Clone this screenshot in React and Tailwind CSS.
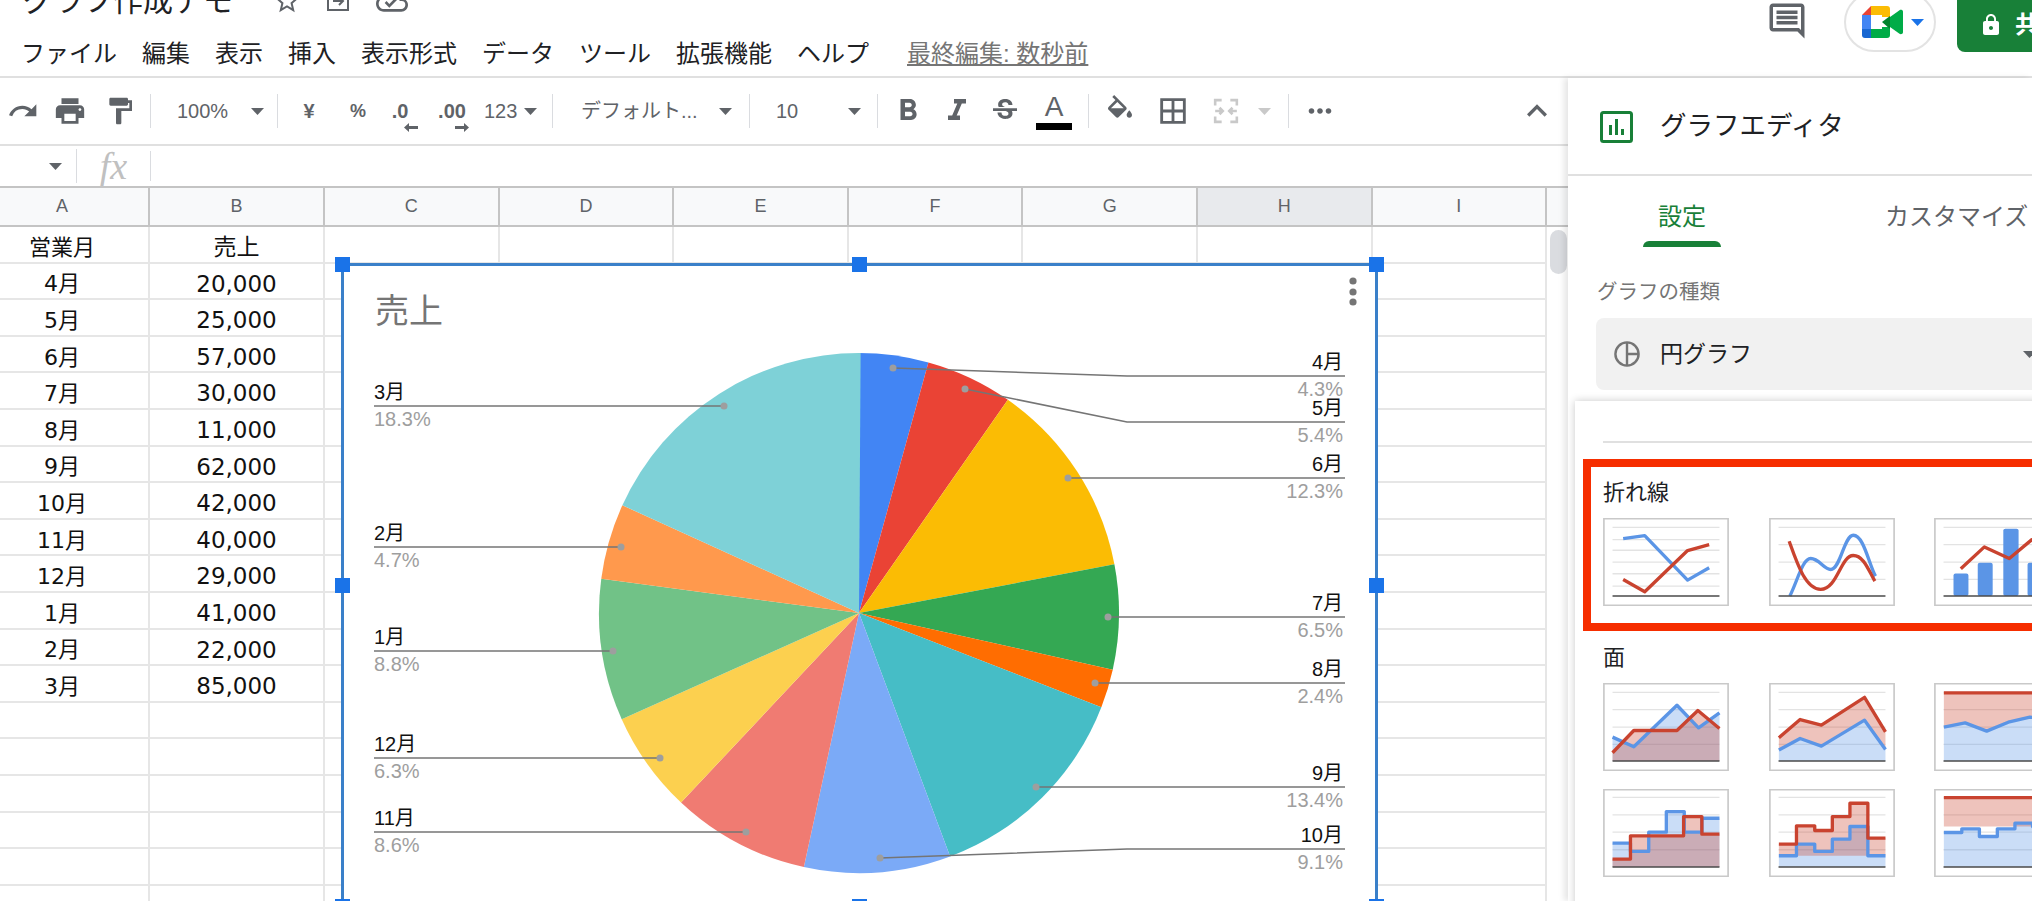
import {
  MdRedo, MdPrint, MdFormatPaint, MdFormatBold, MdFormatItalic, MdStrikethroughS,
  MdBorderAll, MdMoreHoriz, MdExpandLess, MdStarBorder,
  MdOutlineCloudDone, MdOutlineComment, MdLock,
} from 'react-icons/md'

const ROWS = [
  ['営業月', '売上'], ['4月', '20,000'], ['5月', '25,000'], ['6月', '57,000'], ['7月', '30,000'],
  ['8月', '11,000'], ['9月', '62,000'], ['10月', '42,000'], ['11月', '40,000'], ['12月', '29,000'],
  ['1月', '41,000'], ['2月', '22,000'], ['3月', '85,000'], ['', ''], ['', ''], ['', ''], ['', ''], ['', ''], ['', ''], ['', ''],
]

const COLS = ['C', 'D', 'E', 'F', 'G', 'H', 'I']

const SLICES = [
  { pct: 4.3, color: '#4285f4' }, { pct: 5.4, color: '#ea4335' }, { pct: 12.3, color: '#fbbc04' },
  { pct: 6.5, color: '#34a853' }, { pct: 2.4, color: '#ff6d01' }, { pct: 13.4, color: '#46bdc6' },
  { pct: 9.1, color: '#7baaf7' }, { pct: 8.6, color: '#f07b72' }, { pct: 6.3, color: '#fcd04f' },
  { pct: 8.8, color: '#71c287' }, { pct: 4.7, color: '#ff994d' }, { pct: 18.3, color: '#7ed1d7' },
]

const LABELS = [
  { m: '3月', p: '18.3%', y: 406, dot: [724, 406], side: 'l' },
  { m: '2月', p: '4.7%', y: 547, dot: [621, 547], side: 'l' },
  { m: '1月', p: '8.8%', y: 651, dot: [613, 651], side: 'l' },
  { m: '12月', p: '6.3%', y: 758, dot: [660, 758], side: 'l' },
  { m: '11月', p: '8.6%', y: 832, dot: [746, 832], side: 'l' },
  { m: '4月', p: '4.3%', y: 376, dot: [893, 368], side: 'r', elbow: 1127 },
  { m: '5月', p: '5.4%', y: 422, dot: [965, 389], side: 'r', elbow: 1127 },
  { m: '6月', p: '12.3%', y: 478, dot: [1068, 478], side: 'r' },
  { m: '7月', p: '6.5%', y: 617, dot: [1108, 617], side: 'r' },
  { m: '8月', p: '2.4%', y: 683, dot: [1095, 683], side: 'r' },
  { m: '9月', p: '13.4%', y: 787, dot: [1036, 787], side: 'r' },
  { m: '10月', p: '9.1%', y: 849, dot: [880, 858], side: 'r', elbow: 1127 },
]

const CX = 859
const CY = 613
const R = 260

function wedges() {
  let start = 0
  return SLICES.map(s => {
    const end = start + (s.pct / 100) * Math.PI * 2
    const large = end - start > Math.PI ? 1 : 0
    const d = `M${CX} ${CY}L${CX + R * Math.sin(start)} ${CY - R * Math.cos(start)}A${R} ${R} 0 ${large} 1 ${CX + R * Math.sin(end)} ${CY - R * Math.cos(end)}Z`
    start = end
    return { d, color: s.color }
  })
}

const BLUE = '#5b95e6'
const RED = '#c9432f'

// thumbnails are drawn in 3x units, 378 x 265
function Thumb({ lines = [28, 80, 133, 185], children }) {
  return (
    <svg viewBox="0 0 378 265" className="w-[126px] h-[88px] shrink-0 bg-white">
      <rect x="2" y="2" width="374" height="261" fill="none" stroke="#c9c9c9" strokeWidth="5" />
      {lines.map(y => <line key={y} x1="28" x2="350" y1={y} y2={y} stroke="#e3e3e3" strokeWidth="4" />)}
      {children}
      <line x1="28" x2="350" y1="235" y2="235" stroke="#4a4a4a" strokeWidth="5" />
    </svg>
  )
}

function Stroke({ d, color }) {
  return <path d={d} fill="none" stroke={color} strokeWidth="10" strokeLinejoin="round" />
}

// steps: list of [end x, y]
function step(points, from = 28) {
  let d = `M${from} ${points[0][1]}`
  points.forEach(([x, y]) => { d += `V${y}H${x}` })
  return d
}

function Area({ top, bottom, fill }) {
  return <path d={`${top}${bottom}Z`} fill={fill} stroke="none" />
}

const Arrow = ({ className = 'fill-[#5f6368]' }) => (
  <svg width="13" height="7" viewBox="0 0 13 7" className={`shrink-0 ${className}`}><path d="M0 0h13L6.5 7z" /></svg>
)

const Sep = () => <div className="w-px h-[34px] bg-[#dadce0] shrink-0" />

const SmallArrow = ({ dir, className }) => (
  <svg width="14" height="9" viewBox="0 0 14 9" className={`fill-[#5f6368] ${className}`}>
    {dir === 'l' ? <path d="M0 4.5L5 0v3h9v3H5v3z" /> : <path d="M14 4.5L9 0v3H0v3h9v3z" />}
  </svg>
)

function Toolbar() {
  return (
    <div className="flex items-center h-[68px] border-b-2 border-[#e0e0e0] text-[#5f6368] text-[20px]">
      <div className="w-[46px] flex justify-center shrink-0"><MdRedo size={32} /></div>
      <div className="w-[48px] flex justify-center shrink-0"><MdPrint size={34} /></div>
      <div className="w-[52px] flex justify-center shrink-0"><MdFormatPaint size={32} /></div>
      <div className="w-[4px] shrink-0" />
      <Sep />
      <span className="ml-[26px] w-[50px] shrink-0">100%</span>
      <div className="ml-[24px] flex"><Arrow /></div>
      <div className="ml-[13px] flex"><Sep /></div>
      <div className="w-[62px] text-center font-bold shrink-0">¥</div>
      <div className="w-[36px] text-center font-bold text-[18px] shrink-0">%</div>
      <div className="w-[48px] flex flex-col items-center shrink-0 pt-[8px]">
        <span className="leading-[24px] font-bold text-[20px]">.0</span>
        <SmallArrow dir="l" className="ml-[22px]" />
      </div>
      <div className="w-[56px] flex flex-col items-center shrink-0 pt-[8px]">
        <span className="leading-[24px] font-bold text-[20px]">.00</span>
        <SmallArrow dir="r" className="ml-[20px]" />
      </div>
      <span className="ml-[4px] w-[36px] shrink-0">123</span>
      <div className="ml-[4px] flex"><Arrow /></div>
      <div className="ml-[15px] flex"><Sep /></div>
      <span className="ml-[28px] w-[116px] shrink-0 whitespace-nowrap text-[20px]">デフォルト...</span>
      <div className="ml-[22px] flex"><Arrow /></div>
      <div className="ml-[17px] flex"><Sep /></div>
      <span className="ml-[26px] w-[24px] shrink-0">10</span>
      <div className="ml-[48px] flex"><Arrow /></div>
      <div className="ml-[16px] flex"><Sep /></div>
      <div className="w-[60px] flex justify-center shrink-0"><MdFormatBold size={36} /></div>
      <div className="w-[38px] flex justify-center shrink-0"><MdFormatItalic size={36} /></div>
      <div className="w-[58px] flex justify-center shrink-0"><MdStrikethroughS size={32} /></div>
      <div className="w-[40px] flex flex-col items-center shrink-0">
        <span className="text-[28px] leading-[30px] text-[#5f6368]">A</span>
        <div className="w-[36px] h-[7px] bg-black mt-[1px]" />
      </div>
      <div className="ml-[14px] flex"><Sep /></div>
      <div className="w-[62px] flex justify-center shrink-0">
        <svg width="32" height="32" viewBox="0 0 24 24" fill="#5f6368">
          <path d="M16.56 8.94L7.62 0 6.21 1.41l2.38 2.38-5.15 5.15c-.59.59-.59 1.54 0 2.12l5.5 5.5c.29.29.68.44 1.06.44s.77-.15 1.06-.44l5.5-5.5c.59-.58.59-1.53 0-2.12zM5.21 10L10 5.21 14.79 10H5.21zM19 11.5s-2 2.17-2 3.5c0 1.1.9 2 2 2s2-.9 2-2c0-1.33-2-3.5-2-3.5z" />
        </svg>
      </div>
      <div className="w-[44px] flex justify-center shrink-0"><MdBorderAll size={34} /></div>
      <div className="w-[62px] flex justify-center shrink-0">
        <svg width="28" height="26" viewBox="0 0 24 24" fill="none" stroke="#c9c9c9" strokeWidth="2.4">
          <path d="M2 7V2h6M16 2h6v5M2 17v5h6M16 22h6v-5M2 12h7M6 9l3 3-3 3M22 12h-7M18 9l-3 3 3 3" />
        </svg>
      </div>
      <div className="ml-[1px] flex"><Arrow className="fill-[#c9c9c9]" /></div>
      <div className="ml-[17px] flex"><Sep /></div>
      <div className="w-[62px] flex justify-center shrink-0"><MdMoreHoriz size={34} /></div>
      <div className="ml-auto mr-[11px] w-[40px] flex justify-center"><MdExpandLess size={42} /></div>
    </div>
  )
}

function Chart() {
  return (
    <div className="absolute left-[341px] top-[77px] w-[1037px] h-[645px] bg-white border-[3px] border-[#3a80c9]">
      <svg viewBox="344 266 1031 639" className="w-full h-full block">
        <text x="375" y="323" fontSize="34" fill="#757575">売上</text>
        {wedges().map((w, i) => <path key={i} d={w.d} fill={w.color} />)}
        {LABELS.map(l => {
          const left = l.side === 'l'
          const x = left ? 374 : 1345
          const points = l.elbow
            ? `${x},${l.y} ${l.elbow},${l.y} ${l.dot[0]},${l.dot[1]}`
            : `${x},${l.y} ${l.dot[0]},${l.dot[1]}`
          const tx = left ? 374 : 1343
          const anchor = left ? 'start' : 'end'
          return (
            <g key={l.m}>
              <polyline points={points} fill="none" stroke="#757575" strokeWidth="1.6" />
              <circle cx={l.dot[0]} cy={l.dot[1]} r="3.5" fill="#9e9e9e" />
              <text x={tx} y={l.y - 7} fontSize="20" fill="#111" textAnchor={anchor}>{l.m}</text>
              <text x={tx} y={l.y + 20} fontSize="20" fill="#9e9e9e" textAnchor={anchor}>{l.p}</text>
            </g>
          )
        })}
        <circle cx="1353" cy="281" r="3.6" fill="#757575" />
        <circle cx="1353" cy="292" r="3.6" fill="#757575" />
        <circle cx="1353" cy="302" r="3.6" fill="#757575" />
      </svg>
      <div className="absolute -left-[9px] -top-[9px] w-[15px] h-[15px] bg-[#1a73e8]" />
      <div className="absolute left-[508px] -top-[9px] w-[15px] h-[15px] bg-[#1a73e8]" />
      <div className="absolute -right-[9px] -top-[9px] w-[15px] h-[15px] bg-[#1a73e8]" />
      <div className="absolute -left-[9px] top-[312px] w-[15px] h-[15px] bg-[#1a73e8]" />
      <div className="absolute -right-[9px] top-[312px] w-[15px] h-[15px] bg-[#1a73e8]" />
      <div className="absolute -left-[9px] -bottom-[9px] w-[15px] h-[15px] bg-[#1a73e8]" />
      <div className="absolute left-[508px] -bottom-[9px] w-[15px] h-[15px] bg-[#1a73e8]" />
      <div className="absolute -right-[9px] -bottom-[9px] w-[15px] h-[15px] bg-[#1a73e8]" />
    </div>
  )
}

function Sheet() {
  return (
    <div className="relative flex-1 overflow-hidden flex">
      <div className="w-[1547px] shrink-0">
        <div className="flex h-[41px] bg-[#f8f9fa] border-y-2 border-[#c4c4c4] text-[18px] text-[#5f6368] font-normal">
          <div className="w-[150px] shrink-0 pr-[24px] flex items-center justify-center border-r-2 border-[#c4c4c4]">A</div>
          <div className="w-[175px] shrink-0 flex items-center justify-center border-r-2 border-[#c4c4c4]">B</div>
          {COLS.map(c => (
            <div key={c} className={`w-[174.6px] shrink-0 flex items-center justify-center border-r-2 border-[#c4c4c4] ${c === 'H' ? 'bg-[#e8eaed]' : ''}`}>{c}</div>
          ))}
        </div>
        {ROWS.map((r, i) => (
          <div key={i} className="flex h-[36.6px] border-b-2 border-[#e6e6e6] text-[#111] font-['DejaVu_Sans','Noto_Sans_CJK_JP',sans-serif]">
            <div className="w-[150px] shrink-0 pr-[24px] pt-[6px] flex items-center justify-center border-r-2 border-[#e6e6e6] text-[22px]">{r[0]}</div>
            <div className="w-[175px] shrink-0 pt-[6px] flex items-center justify-center border-r-2 border-[#e6e6e6] text-[23px]">{r[1]}</div>
            {COLS.map(c => <div key={c} className="w-[174.6px] shrink-0 border-r-2 border-[#e6e6e6]" />)}
          </div>
        ))}
      </div>
      <div className="flex-1 flex flex-col">
        <div className="h-[41px] bg-[#f8f9fa] border-y-2 border-[#c4c4c4]" />
        <div className="w-[17px] h-[44px] ml-[3px] mt-[3px] rounded-full bg-[#dadce0]" />
      </div>
      <Chart />
    </div>
  )
}

function LineThumbs() {
  return (
    <div className="flex gap-[39.5px]">
      <Thumb lines={[28, 65, 97, 133, 168, 205]}>
        <Stroke color={BLUE} d="M60 62L125 53L254 187L319 150" />
        <Stroke color={RED} d="M60 185L125 222L254 98L319 80" />
      </Thumb>
      <Thumb>
        <Stroke color={BLUE} d="M62 235C85 190 100 122 125 122C150 122 165 155 185 155C215 155 225 52 253 52C285 52 300 140 320 175" />
        <Stroke color={RED} d="M60 70C85 140 110 215 155 215C205 215 215 113 253 113C285 113 300 160 318 190" />
      </Thumb>
      <Thumb>
        <rect x="58" y="167" width="45" height="68" rx="6" fill={BLUE} />
        <rect x="131" y="135" width="45" height="100" rx="6" fill={BLUE} />
        <rect x="208" y="32" width="46" height="203" rx="6" fill={BLUE} />
        <rect x="281" y="135" width="45" height="100" rx="6" fill={BLUE} />
        <Stroke color={RED} d="M80 153L151 87L226 122L294 65L350 80" />
      </Thumb>
    </div>
  )
}

const AREA_BLUE = 'rgba(91,149,230,0.32)'
const AREA_RED = 'rgba(201,67,47,0.32)'

function AreaThumbs() {
  const b1 = 'M28 163L92 192L222 67L287 135L350 90'
  const r1 = 'M28 210L92 143L222 143L285 83L350 137'
  const r2 = 'M29 165L93 110L157 127L287 43L350 147'
  const b2 = 'M29 202L93 167L157 190L287 112L350 200'
  const b3 = 'M29 133L93 120L158 145L223 118L288 103L350 110'
  return (
    <div className="flex gap-[39.5px]">
      <Thumb>
        <Area top={b1} bottom="V235H28" fill={AREA_BLUE} />
        <Area top={r1} bottom="V235H28" fill={AREA_RED} />
        <Stroke color={BLUE} d={b1} />
        <Stroke color={RED} d={r1} />
      </Thumb>
      <Thumb>
        <Area top={b2} bottom="V235H29" fill={AREA_BLUE} />
        <Area top={r2} bottom="L350 200L287 112L157 190L93 167L29 202Z" fill={AREA_RED} />
        <Stroke color={BLUE} d={b2} />
        <Stroke color={RED} d={r2} />
      </Thumb>
      <Thumb>
        <Area top={b3} bottom="V235H29" fill={AREA_BLUE} />
        <path d="M29 30H350V110L288 103L223 118L158 145L93 120L29 133Z" fill={AREA_RED} />
        <Stroke color={BLUE} d={b3} />
        <Stroke color={RED} d="M29 30H350" />
      </Thumb>
    </div>
  )
}

function StepThumbs() {
  const b1 = step([[82, 163], [137, 188], [190, 130], [244, 68], [297, 130], [350, 88]])
  const r1 = step([[82, 211], [242, 141], [297, 83], [350, 136]])
  const r2 = step([[82, 166], [137, 111], [190, 125], [243, 83], [297, 43], [350, 148]], 29)
  const b2 = step([[82, 201], [137, 166], [190, 188], [243, 151], [297, 113], [350, 201]], 29)
  const b3 = step([[83, 131], [136, 120], [190, 143], [243, 120], [296, 103], [350, 113]], 29)
  return (
    <div className="flex gap-[39.5px]">
      <Thumb lines={[25, 78, 130, 183]}>
        <Area top={b1} bottom="V235H28" fill={AREA_BLUE} />
        <Area top={r1} bottom="V235H28" fill={AREA_RED} />
        <Stroke color={BLUE} d={b1} />
        <Stroke color={RED} d={r1} />
      </Thumb>
      <Thumb lines={[25, 78, 130, 183]}>
        <Area top={b2} bottom="V235H29" fill={AREA_BLUE} />
        <Area top={r2} bottom="V201H29" fill={AREA_RED} />
        <Stroke color={BLUE} d={b2} />
        <Stroke color={RED} d={r2} />
      </Thumb>
      <Thumb lines={[25, 78, 130, 183]}>
        <Area top={b3} bottom="V235H29" fill={AREA_BLUE} />
        <path d="M29 26H350V113H29Z" fill={AREA_RED} />
        <Stroke color={BLUE} d={b3} />
        <Stroke color={RED} d="M29 26H350" />
      </Thumb>
    </div>
  )
}

function EditorPanel() {
  return (
    <div className="relative z-10 flex-1 bg-white shadow-[-4px_0_6px_rgba(0,0,0,0.1)] overflow-hidden">
      <div className="h-[98px] pt-[2px] flex items-center pl-[32px] border-b-2 border-[#e0e0e0]">
        <svg width="33" height="32" viewBox="0 0 33 32" fill="none" className="shrink-0">
          <rect x="1.5" y="1.5" width="30" height="29" rx="2" stroke="#188038" strokeWidth="3" />
          <path d="M9 14v10h3V14zM15 8v16h3V8zM21 18v6h3v-6z" fill="#188038" />
        </svg>
        <span className="ml-[27px] text-[26.5px] text-[#202124] whitespace-nowrap">グラフエディタ</span>
      </div>
      <div className="flex h-[71px] text-[24px]">
        <div className="ml-[75px] w-[78px] flex flex-col items-center pt-[23px] text-[#188038]">
          <span className="flex-1 leading-[36px]">設定</span>
          <div className="w-full h-[6px] rounded-t-md bg-[#188038]" />
        </div>
        <span className="ml-[164px] pt-[23px] leading-[36px] whitespace-nowrap text-[#5f6368]">カスタマイズ</span>
      </div>
      <div className="ml-[29px] mt-[33px] text-[20.5px] leading-[24px] text-[#757575]">グラフの種類</div>
      <div className="ml-[28px] mt-[14px] w-[444px] h-[72px] rounded-lg bg-[#f1f1f1] flex items-center pl-[18px] pr-[4px]">
        <svg width="26" height="26" viewBox="0 0 26 26" fill="none" stroke="#757575" strokeWidth="2.4" className="shrink-0">
          <circle cx="13" cy="13" r="11.6" />
          <path d="M13 1v24M13 13h12" />
        </svg>
        <span className="ml-[20px] text-[23px] text-[#202124]">円グラフ</span>
        <div className="ml-auto flex"><Arrow /></div>
      </div>

      {/* dropdown over the select */}
      <div className="absolute left-[7px] top-[323px] w-[470px] h-[520px] bg-white shadow-[0_0_8px_rgba(0,0,0,0.22)]">
        <div className="ml-[28px] mt-[40px] h-[2px] bg-[#e0e0e0]" />
        <div className="ml-[8px] mt-[16px] w-[520px] h-[172px] border-[8px] border-[#f62e00] pl-[12px]">
          <div className="h-[51px] pt-[14px] text-[22px] leading-[24px] text-[#202124]">折れ線</div>
          <LineThumbs />
        </div>
        <div className="ml-[28px] mt-[15px] text-[22px] leading-[24px] text-[#202124]">面</div>
        <div className="ml-[28px] mt-[13px] w-[520px]">
          <AreaThumbs />
          <div className="mt-[18px]"><StepThumbs /></div>
        </div>
      </div>
    </div>
  )
}

const MENU = ['ファイル', '編集', '表示', '挿入', '表示形式', 'データ', 'ツール', '拡張機能', 'ヘルプ']

export default function App() {
  return (
    <div className="w-[2032px] h-[901px] overflow-hidden bg-white flex flex-col text-[#202124] [font-family:'Liberation_Sans','Noto_Sans_CJK_JP',sans-serif]">
      {/* ── Header ── */}
      <header className="h-[78px] shrink-0 flex border-b-2 border-[#e0e0e0]">
        <div className="w-[1766px] shrink-0">
          <div className="h-[34px] -mt-[16px] pl-[23px] flex items-center text-[#5f6368]">
            <span className="w-[210px] shrink-0 text-[30px] leading-[34px] text-[#202124] whitespace-nowrap">グラフ作成デモ</span>
            <div className="ml-[39px] flex"><MdStarBorder size={30} /></div>
            <svg width="24" height="24" viewBox="0 0 24 24" fill="none" stroke="#5f6368" strokeWidth="2" className="ml-[24px]">
              <path d="M2 3h20v18H2zM7 12h9M13 8l4 4-4 4" />
            </svg>
            <div className="ml-[26px] flex"><MdOutlineCloudDone size={32} /></div>
          </div>
          <div className="mt-[18px] pl-[21px] h-[36px] flex items-center gap-[25px] text-[24px] whitespace-nowrap">
            {MENU.map(m => <span key={m}>{m}</span>)}
            <span className="ml-[13px] text-[#757575] underline">最終編集: 数秒前</span>
          </div>
        </div>
        <div className="flex items-start">
          <div className="flex text-[#5f6368]"><MdOutlineComment size={42} /></div>
          <div className="ml-[36px] -mt-[8px] w-[92px] h-[60px] shrink-0 rounded-full border-2 border-[#e3e3e3] flex items-center pl-[16px] gap-[8px]">
            <svg width="41" height="32" viewBox="0 0 41 32" className="shrink-0">
              <path d="M9 0L0 9h9z" fill="#ea4335" />
              <path d="M0 9h9v14H0z" fill="#4285f4" />
              <path d="M0 23h9v9H3a3 3 0 0 1-3-3z" fill="#1967d2" />
              <path d="M9 0h16a3 3 0 0 1 3 3v8h-8V9H9z" fill="#fbbc04" />
              <path d="M9 23h11v-2h8v8a3 3 0 0 1-3 3H9z" fill="#00ac47" />
              <path d="M20 16l8-6v13z" fill="#00832d" />
              <path d="M28 11l9.5-6.8c1.2-.8 3.5-.2 3.5 1.5v20.6c0 1.7-2.3 2.3-3.5 1.5L28 21z" fill="#00ac47" />
            </svg>
            <Arrow className="fill-[#1a73e8]" />
          </div>
          <div className="ml-[21px] -mt-[8px] w-[100px] h-[60px] shrink-0 rounded-lg bg-[#188038] flex items-center pl-[22px] pt-[6px] text-white whitespace-nowrap">
            <MdLock size={24} className="shrink-0" />
            <span className="ml-[12px] text-[24px] font-bold">共有</span>
          </div>
        </div>
      </header>

      <div className="flex-1 flex min-h-0">
        {/* ── Spreadsheet ── */}
        <main className="w-[1568px] shrink-0 flex flex-col">
          <Toolbar />
          <div className="h-[40px] shrink-0 flex items-center">
            <div className="ml-[49px] flex"><Arrow /></div>
            <div className="ml-[14px] w-px h-[34px] bg-[#dadce0]" />
            <div className="w-[73px] text-center text-[38px] leading-[34px] italic text-[#c0c0c0] [font-family:'Liberation_Serif',serif]">fx</div>
            <div className="w-px h-[30px] bg-[#dadce0]" />
          </div>
          <Sheet />
        </main>
        <EditorPanel />
      </div>
    </div>
  )
}
